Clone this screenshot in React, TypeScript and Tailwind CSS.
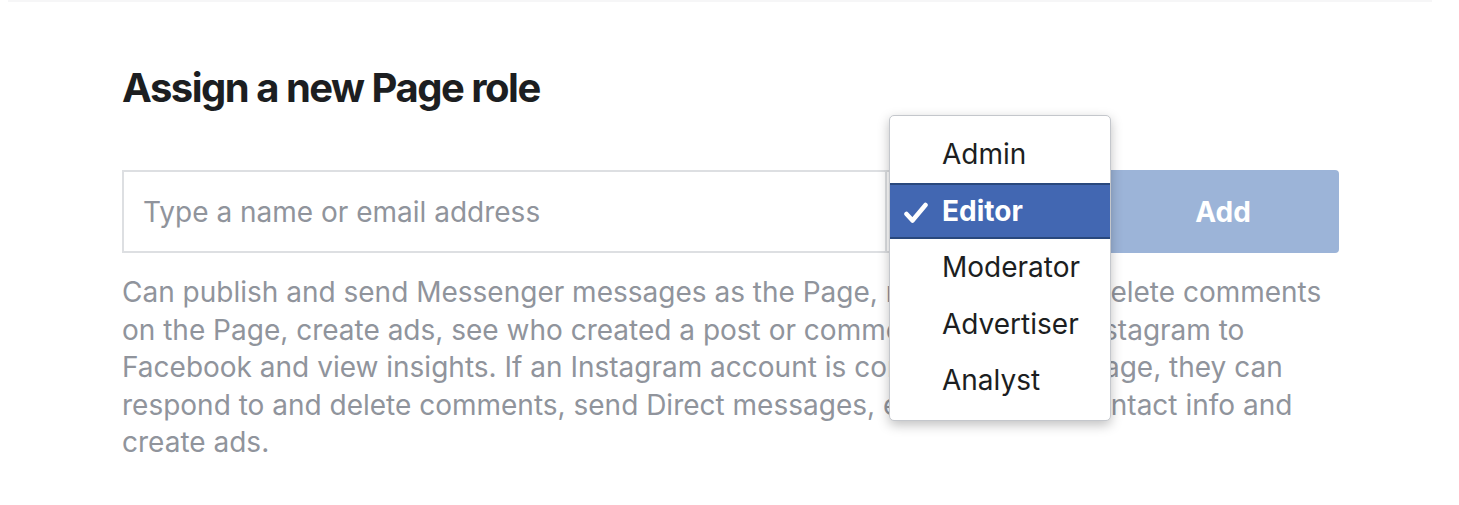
import React from "react";

const lines = [
  "Can publish and send Messenger messages as the Page, respond to and delete comments",
  "on the Page, create ads, see who created a post or comment, post from Instagram to",
  "Facebook and view insights. If an Instagram account is connected to the Page, they can",
  "respond to and delete comments, send Direct messages, edit account's contact info and",
  "create ads.",
];

const items = ["Admin", "Editor", "Moderator", "Advertiser", "Analyst"];

export default function App() {
  return (
    <div
      className="relative w-[1459px] h-[505px] bg-white overflow-hidden"
      style={{ fontFamily: "Inter, 'Noto Sans', sans-serif" }}
    >
      <div className="mx-[8px] w-[1424px] h-[2px] bg-[#f6f6f7]" />
      <div className="pl-[122px] pr-[120px] pt-[62px]">
        <h2 className="text-[40px] leading-[48px] font-bold text-[#1c1e21] tracking-[-1.5px]">
          Assign a new Page role
        </h2>
        <div className="mt-[58px] flex h-[83px]">
          <div className="flex-1 flex items-center border-2 border-[#dddfe2] pl-[19px]">
            <input
              className="w-full outline-none bg-transparent text-[28px] text-[#1c1e21] placeholder:text-[#90949c]"
              placeholder="Type a name or email address"
            />
          </div>
          <div className="w-[220px] border-y-2 border-[#dddfe2] bg-white" />
          <button className="w-[232px] rounded-r-[4px] bg-[#9cb4d8] text-white text-[28px] font-bold">
            Add
          </button>
        </div>
        <div className="mt-[21px] text-[28px] leading-[37.5px] text-[#90949c]">
          {lines.map((l) => (
            <div key={l} className="whitespace-nowrap">
              {l}
            </div>
          ))}
        </div>
      </div>

      <div className="absolute left-[889px] top-[115px] w-[222px] rounded-[5px] border border-[#c4c7cc] bg-white pt-[10px] pb-[11px] shadow-[0_4px_12px_rgba(0,0,0,0.25)]">
        {items.map((it) =>
          it === "Editor" ? (
            <div
              key={it}
              className="relative flex h-[56.5px] items-center border-y-2 border-[#29487d] bg-[#4267b2] pl-[52px] text-[28px] font-bold text-white"
            >
              <svg
                className="absolute left-[14px] top-[17px]"
                width="24"
                height="22"
                viewBox="0 0 24 22"
              >
                <path
                  d="M2.5 12 L8.5 18.5 L21.5 3"
                  fill="none"
                  stroke="white"
                  strokeWidth="4.5"
                  strokeLinecap="round"
                  strokeLinejoin="round"
                />
              </svg>
              {it}
            </div>
          ) : (
            <div
              key={it}
              className="flex h-[56.5px] items-center pl-[52px] text-[28px] text-[#1c1e21]"
            >
              {it}
            </div>
          )
        )}
      </div>
    </div>
  );
}
